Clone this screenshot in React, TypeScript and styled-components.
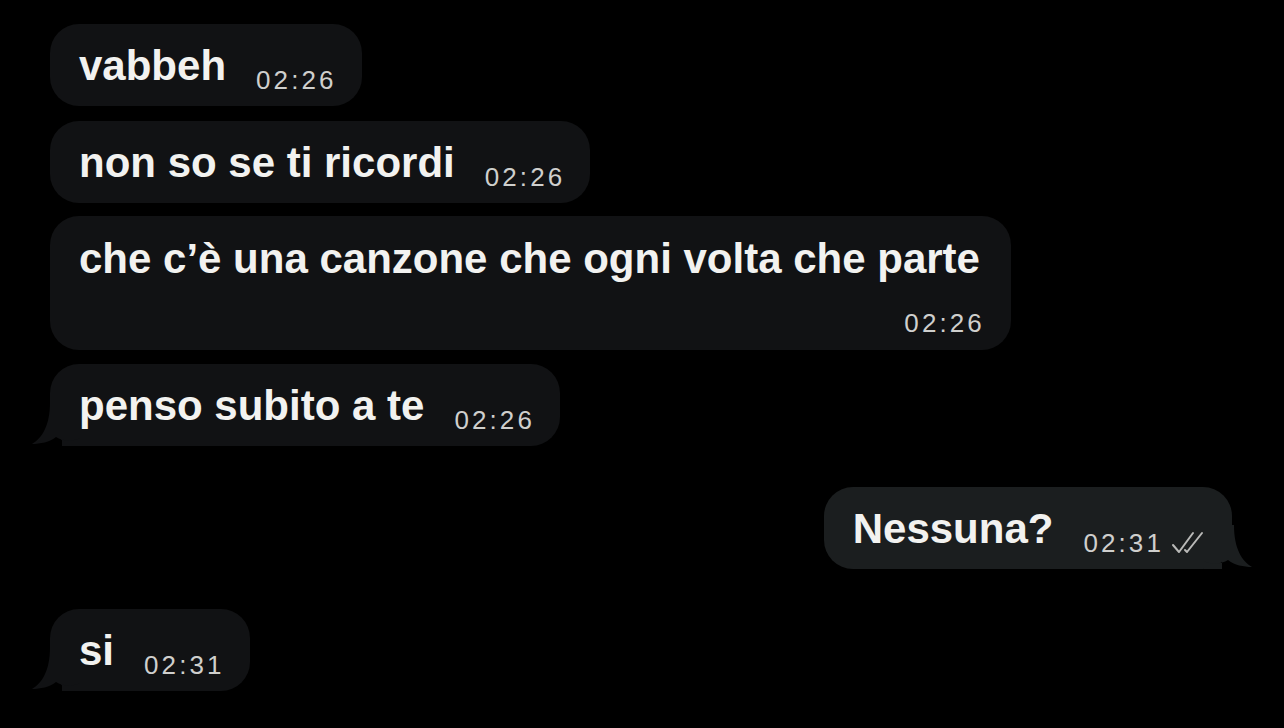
import React from "react";
import styled, { createGlobalStyle } from "styled-components";

const Global = createGlobalStyle`
  html, body { margin: 0; padding: 0; background: #000; }
  body { width: 1284px; height: 728px; overflow: hidden; font-family: "Liberation Sans", Arial, sans-serif; }
`;

const Chat = styled.div`
  display: flex;
  flex-direction: column;
  padding: 24px 52px 0 50px;
`;

const Row = styled.div<{ $out?: boolean; $gap: number }>`
  display: flex;
  justify-content: ${(p) => (p.$out ? "flex-end" : "flex-start")};
  margin-top: ${(p) => p.$gap}px;
`;

const Bubble = styled.div<{ $out?: boolean; $stacked?: boolean }>`
  position: relative;
  display: flex;
  flex-direction: ${(p) => (p.$stacked ? "column" : "row")};
  align-items: flex-end;
  gap: 30px;
  background: ${(p) => (p.$out ? "#1b1e1f" : "#111214")};
  border-radius: 29px;
  padding: ${(p) => (p.$stacked ? "22px 26px 14px 29px" : "21px 25px 13px 29px")};
  color: #f2f2f0;
`;

const Text = styled.span<{ $stacked?: boolean }>`
  font-size: 42px;
  font-weight: 700;
  line-height: 42px;
  white-space: nowrap;
  align-self: ${(p) => (p.$stacked ? "flex-start" : "auto")};
  margin: ${(p) => (p.$stacked ? "0 5px 0 0" : "0 0 6px 0")};
`;

const Meta = styled.span`
  display: flex;
  align-items: center;
  gap: 7px;
  font-size: 26px;
  line-height: 26px;
  color: #cfcfcd;
  letter-spacing: 3.1px;
`;

const Tail = styled.svg<{ $out?: boolean }>`
  position: absolute;
  bottom: 0;
  ${(p) => (p.$out ? "right: -20px;" : "left: -18px;")}
  width: 48px;
  height: 44px;
`;

const Ticks = () => (
  <svg width="36" height="26" viewBox="0 0 36 26" fill="none" stroke="#b9b9b7" strokeWidth="2" strokeLinecap="round" strokeLinejoin="round">
    <path d="M2 15 L8 22 L22 3" />
    <path d="M14 20 L16 22 L31 3" />
  </svg>
);

const IncomingTail = () => (
  <Tail viewBox="0 0 48 44">
    <path d="M18 0 L30 0 L30 44 L48 44 L48 36 C40 40 30 39 24 35 C18 40 8 42 0 42 C10 36 18 24 18 0 Z" fill="#111214" />
  </Tail>
);

const OutgoingTail = () => (
  <Tail $out viewBox="0 0 48 44">
    <path d="M30 0 L18 0 L18 44 L0 44 L0 36 C8 40 18 39 24 35 C30 40 40 42 48 42 C38 36 30 24 30 0 Z" fill="#1b1e1f" />
  </Tail>
);

type Msg = { text: string; time: string; out?: boolean; tail?: boolean; stacked?: boolean; gap: number; read?: boolean };

const messages: Msg[] = [
  { text: "vabbeh", time: "02:26", gap: 0 },
  { text: "non so se ti ricordi", time: "02:26", gap: 15 },
  { text: "che c\u2019è una canzone che ogni volta che parte", time: "02:26", gap: 13, stacked: true },
  { text: "penso subito a te", time: "02:26", gap: 14, tail: true },
  { text: "Nessuna?", time: "02:31", gap: 41, out: true, tail: true, read: true },
  { text: "si", time: "02:31", gap: 40, tail: true },
];

export default function App() {
  return (
    <>
      <Global />
      <Chat>
        {messages.map((m, i) => (
          <Row key={i} $out={m.out} $gap={m.gap}>
            <Bubble $out={m.out} $stacked={m.stacked}>
              {m.tail && (m.out ? <OutgoingTail /> : <IncomingTail />)}
              <Text $stacked={m.stacked}>{m.text}</Text>
              <Meta>
                {m.time}
                {m.read && <Ticks />}
              </Meta>
            </Bubble>
          </Row>
        ))}
      </Chat>
    </>
  );
}
